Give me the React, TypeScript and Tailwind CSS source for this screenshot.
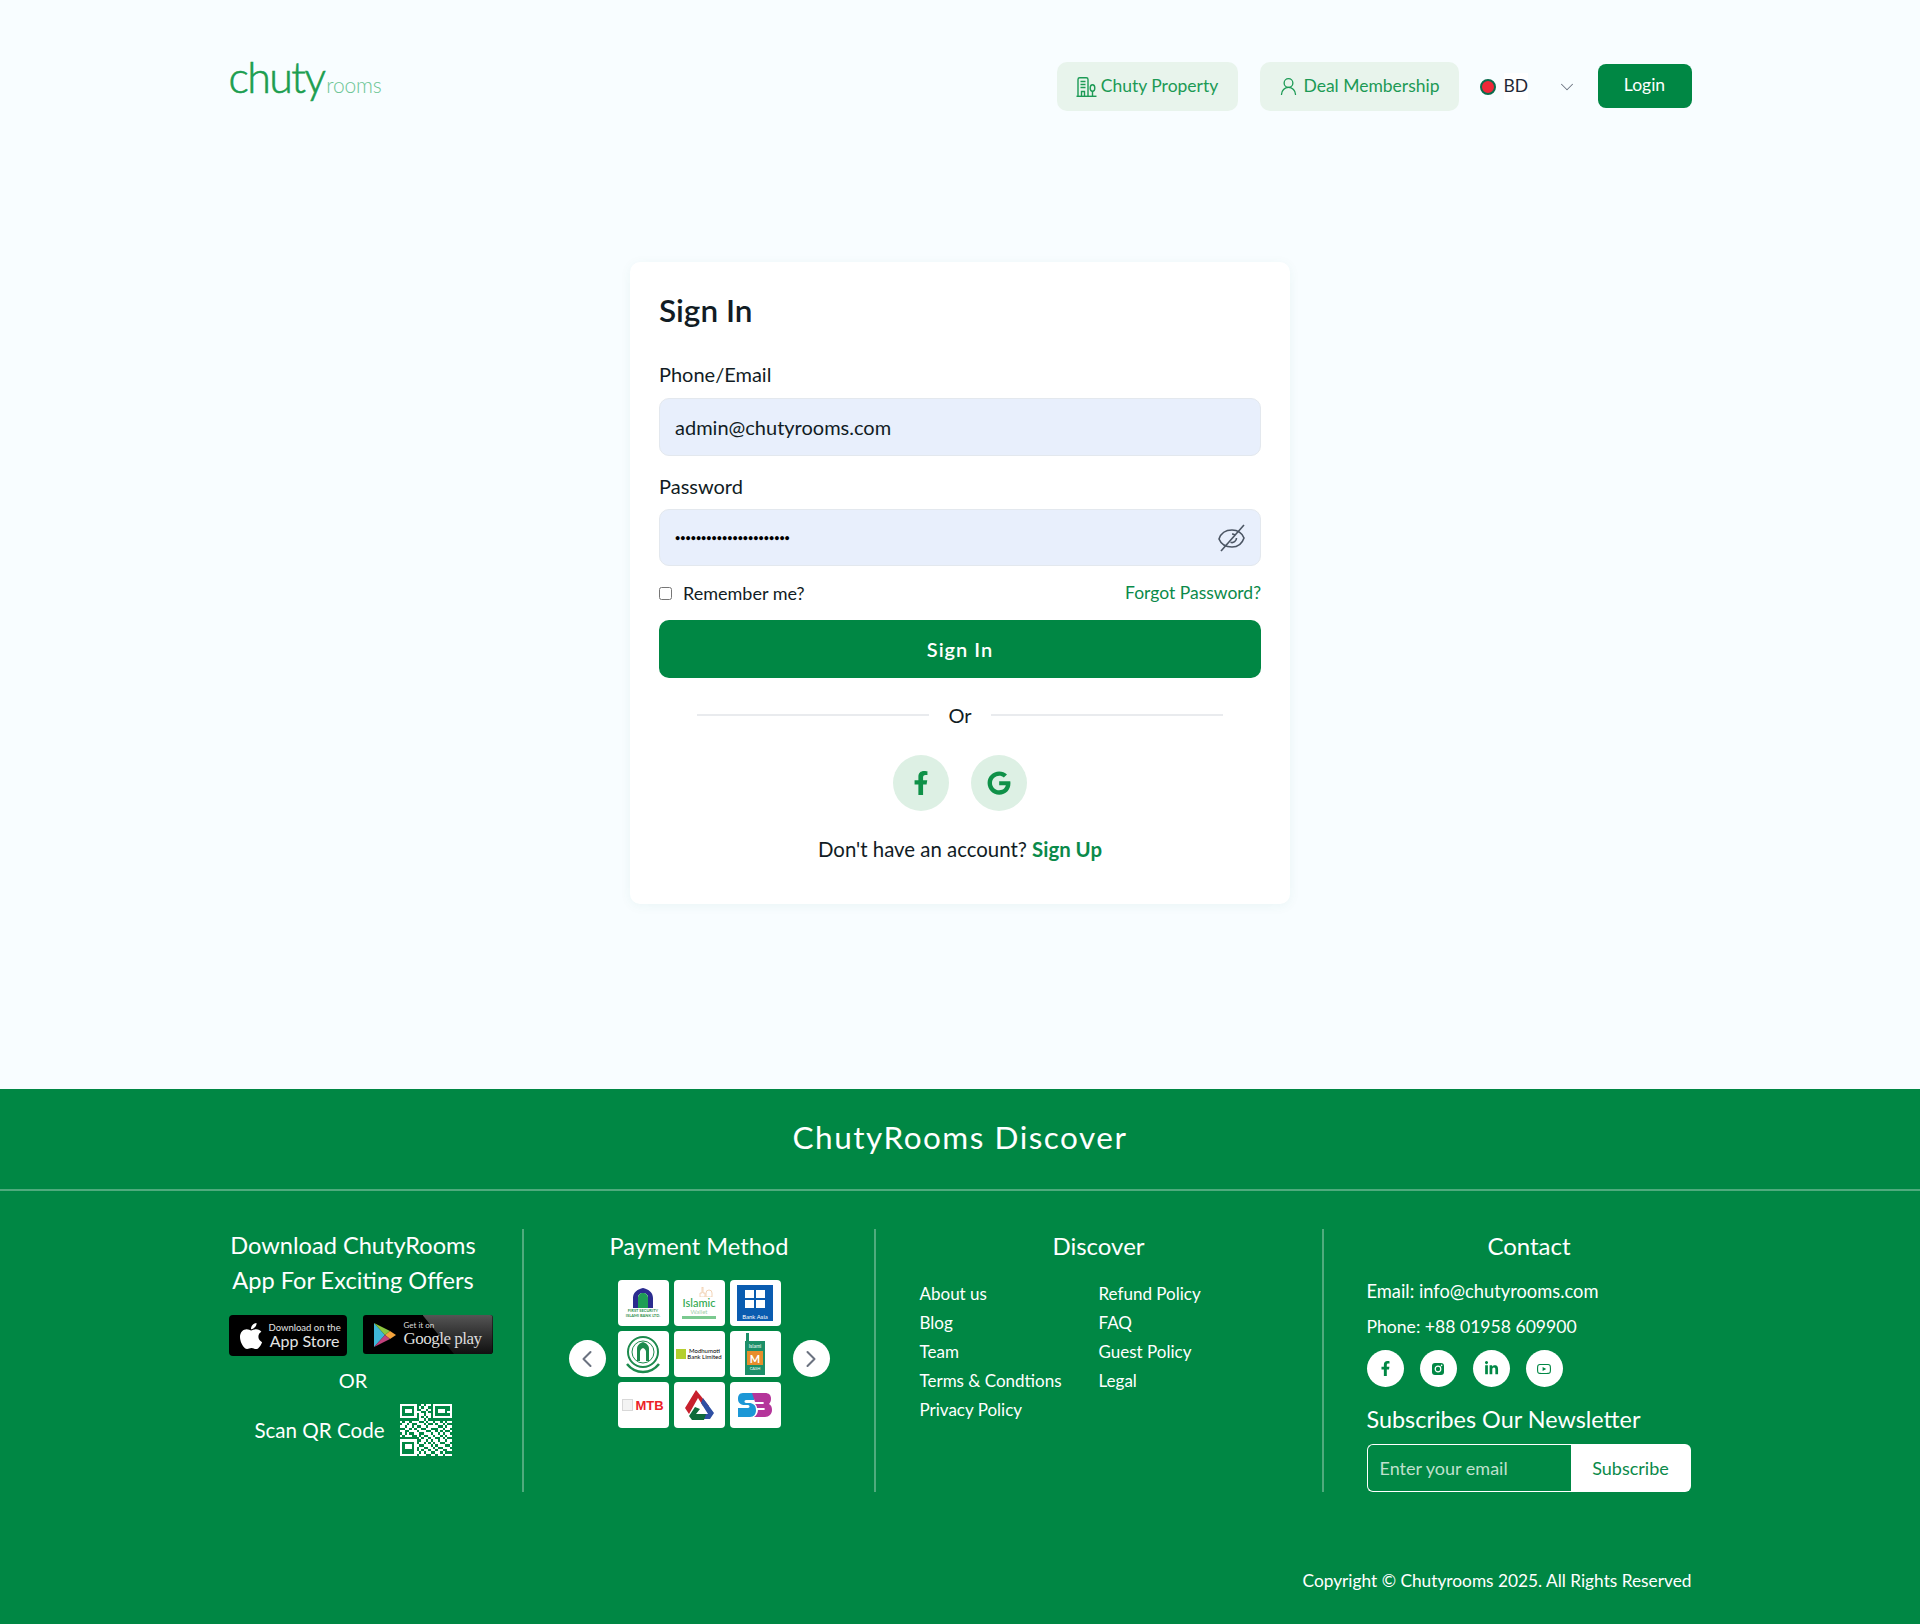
import { ChevronDown, ChevronLeft, ChevronRight, UserRound } from "lucide-react";
import { FaFacebookF, FaApple, FaLinkedinIn, FaGoogle } from "react-icons/fa";
import { AiOutlineYoutube } from "react-icons/ai";

const font = "font-['Lato','Liberation_Sans',sans-serif]";

const qrRows = [
  "1111111001011011111111",
  "1000001010110010000001",
  "1011101001101010111001",
  "1011101110010010111011",
  "1000001011011010000001",
  "1111111010101011111111",
  "0000000011010000000000",
  "1011011100101101101011",
  "0110100111010010110100",
  "1101101001101111001011",
  "0011010110011000110110",
  "1100111011100110101001",
  "0101001100111011010110",
  "1011100101001101101011",
  "0000000010110110010100",
  "1111111001101011011011",
  "1000001011010101100110",
  "1011101100111010111001",
  "1011101011001101001110",
  "1000001010110110110011",
  "1000001101011001101000",
  "1111111011100110110111",
];

function QrCode() {
  return (
    <svg width="52" height="52" viewBox="0 0 22 22" shapeRendering="crispEdges">
      <rect width="22" height="22" fill="#008744" />
      {qrRows.map((row, y) =>
        row.split("").map((c, x) => (c === "1" ? <rect key={`${x}-${y}`} x={x} y={y} width="1" height="1" fill="#fff" /> : null))
      )}
    </svg>
  );
}

function Logo() {
  return (
    <div className="flex items-end w-[154px] h-[35px]">
      <span className="font-['Lato',sans-serif] text-[43px] leading-[36px] font-light text-[#1c9e50] tracking-[-1.6px] [-webkit-text-stroke:0.6px_#1c9e50]">chuty</span>
      <span className="font-['Lato',sans-serif] text-[21px] leading-[20px] font-light text-[#6cc594] ml-[2px] tracking-[-0.2px]">rooms</span>
    </div>
  );
}

function PropertyIcon() {
  return (
    <svg width="21" height="20" viewBox="0 0 21 20" fill="none" stroke="currentColor" strokeWidth="1.4">
      <path d="M0.5 19.3h20" />
      <path d="M2 19V2.5C2 1.5 2.7 0.8 3.7 0.8h6.6c1 0 1.7 0.7 1.7 1.7V19" />
      <path d="M4.5 4.5h5M4.5 7.5h5M4.5 10.5h5" />
      <path d="M5.5 19v-4.5h3V19" />
      <ellipse cx="16.5" cy="11" rx="2.3" ry="3.2" />
      <path d="M16.5 14v5" />
    </svg>
  );
}

function HiddenEye() {
  return (
    <svg width="30" height="28" viewBox="0 0 30 28" fill="none" stroke="#4b5563" strokeWidth="1.6" className="shrink-0">
      <path d="M2 15c2-6 7-9 13-9s10 3 12 8c-2 6-7 9-12 9-6 0-11-3-13-8z" />
      <path d="M15 10a4.5 4.5 0 0 1 3 1.2M19.5 14a4.5 4.5 0 0 1-6 4.3" />
      <path d="M4 27L27 1" />
    </svg>
  );
}

function InstaIcon() {
  return (
    <svg width="14" height="14" viewBox="0 0 14 14">
      <rect x="1" y="1" width="12" height="12" rx="3" fill="#008744" />
      <circle cx="7" cy="7" r="2.8" fill="none" stroke="#fff" strokeWidth="1.2" />
      <circle cx="10.6" cy="3.4" r="0.8" fill="#fff" />
    </svg>
  );
}

function PlayBadge() {
  return (
    <div className="relative flex items-center w-[130px] h-[39px] rounded-[3px] bg-black overflow-hidden shrink-0">
      <div className="absolute top-0 right-0 h-full w-[70px] bg-gradient-to-b from-[#555] to-[#111] [clip-path:polygon(0_0,100%_0,100%_100%,45%_100%)]" />
      <svg width="24" height="26" viewBox="0 0 24 26" className="relative ml-[10px]">
        <polygon points="1,1 12,13 1,25" fill="#3fb6d8" />
        <polygon points="1,1 17,9 12,13" fill="#8cc63f" />
        <polygon points="17,9 23,13 17,17 12,13" fill="#f5a33b" />
        <polygon points="1,25 12,13 17,17" fill="#c2417d" />
      </svg>
      <div className="relative ml-[7px] flex flex-col text-left text-[#dcdcdc] font-['Liberation_Serif',serif]">
        <span className="text-[8px] leading-[9px] font-['Lato',sans-serif]">Get it on</span>
        <span className="text-[17px] leading-[18px] tracking-[-0.5px] whitespace-nowrap">Google play</span>
      </div>
    </div>
  );
}

function StoreBadge() {
  return (
    <div className="flex items-center w-[118px] h-[41px] rounded-[4px] bg-black text-[#e4e4e4] shrink-0">
      <FaApple className="ml-[7px] text-[30px] text-white" />
      <div className="ml-[3px] flex flex-col">
        <span className="text-[9.5px] leading-[11px] whitespace-nowrap">Download on the</span>
        <span className="text-[16px] leading-[16px] whitespace-nowrap">App Store</span>
      </div>
    </div>
  );
}

function BankTile({ children }: { children: React.ReactNode }) {
  return <div className="flex h-[46px] w-[51px] flex-col items-center justify-center overflow-hidden rounded-[4px] bg-white">{children}</div>;
}

function PaymentGrid() {
  return (
    <div className="grid grid-cols-[repeat(3,51px)] gap-x-[5px] gap-y-[5px]">
      <BankTile>
        <svg width="22" height="20" viewBox="0 0 22 20">
          <path d="M1 20V10C1 4 6 1 11 0c5 1 10 4 10 10v10h-5V9c0-2-2-4-5-4S6 7 6 9v11z" fill="#2b2c8f" />
          <path d="M6 20V10c0-3 2-5 5-5s5 2 5 5v10z" fill="#1e9e55" />
        </svg>
        <span className="text-[4px] font-bold leading-[5px] text-[#2f8f4e]">FIRST SECURITY</span>
        <span className="text-[4px] font-bold leading-[5px] text-[#2f8f4e]">ISLAMI BANK LTD.</span>
      </BankTile>
      <BankTile>
        <svg width="34" height="10" viewBox="0 0 34 10">
          <path d="M18 10V6h2V0h1v6h2v4zM24 10V6a3 3 0 0 1 6 0v4z" fill="none" stroke="#efc9a5" strokeWidth="0.8" />
        </svg>
        <span className="text-[11px] font-medium leading-[11px] text-[#2fa84f]">Islamic</span>
        <span className="text-[6px] leading-[7px] text-[#9fcfa9]">Wallet</span>
        <span className="mt-[1px] h-[3px] w-[34px] bg-[#7ac98f]" />
      </BankTile>
      <BankTile>
        <div className="flex h-[36px] w-[36px] flex-col items-center justify-between bg-[#0a5cb0] pt-[5px]">
          <div className="grid grid-cols-2 gap-[2px]">
            <span className="h-[8px] w-[9px] bg-white" />
            <span className="h-[8px] w-[9px] bg-white" />
            <span className="h-[8px] w-[9px] bg-white" />
            <span className="h-[8px] w-[9px] bg-white" />
          </div>
          <span className="text-[6px] leading-[8px] text-white">Bank Asia</span>
        </div>
      </BankTile>
      <BankTile>
        <svg width="40" height="40" viewBox="0 0 40 40">
          <circle cx="20" cy="18" r="15" fill="none" stroke="#1d8a4d" strokeWidth="2" />
          <circle cx="20" cy="18" r="11" fill="none" stroke="#1d8a4d" strokeWidth="1" />
          <path d="M14 27V15c0-4 3-6 6-7 3 1 6 3 6 7v12z" fill="#1d8a4d" />
          <path d="M17 27v-9c0-2 1-3 3-4 2 1 3 2 3 4v9z" fill="#fff" />
          <path d="M4 30c4 5 10 8 16 8s12-3 16-8" fill="none" stroke="#1d8a4d" strokeWidth="2.5" />
        </svg>
      </BankTile>
      <BankTile>
        <div className="flex items-center gap-[1px]">
          <span className="h-[10px] w-[10px] bg-[#b4cf2e]" />
          <div className="flex flex-col">
            <span className="text-[6px] leading-[6px] text-black whitespace-nowrap">Modhumoti</span>
            <span className="text-[6px] leading-[6px] text-black whitespace-nowrap">Bank Limited</span>
          </div>
        </div>
      </BankTile>
      <BankTile>
        <div className="relative flex h-[42px] w-[22px] flex-col items-center justify-end">
          <span className="absolute left-[2px] top-0 h-[10px] w-[3px] bg-[#1c8f68]" />
          <div className="flex h-[34px] w-[20px] flex-col items-center bg-[#1c8f68]">
            <span className="text-[5px] leading-[10px] text-white">Islami</span>
            <span className="flex h-[14px] w-[16px] items-center justify-center bg-[#e88d2a] text-[11px] font-bold leading-none text-white">M</span>
            <span className="text-[4px] leading-[8px] text-white">CASH</span>
          </div>
        </div>
      </BankTile>
      <BankTile>
        <div className="flex items-center gap-[2px]">
          <span className="h-[12px] w-[11px] border border-[#d8d8d8] bg-[#f3f3f3]" />
          <span className="text-[13px] font-bold leading-none text-[#ec2227] font-['Liberation_Sans',sans-serif]">MTB</span>
        </div>
      </BankTile>
      <BankTile>
        <svg width="32" height="32" viewBox="0 0 32 32">
          <path d="M13 1l-11 18 4 6 9-16 5 8h6z" fill="#c8202d" />
          <path d="M20 9l11 15-4 6H13l4-5h8l-7-11z" fill="#2e4fa3" />
          <path d="M6 27l6-9 5 2-4 5h10l-2 6H9z" fill="#0f6b3a" />
        </svg>
      </BankTile>
      <BankTile>
        <svg width="34" height="26" viewBox="0 0 34 26">
          <path d="M16 1H5C1 1 0 4 0 7c0 4 3 6 7 6h3c2 0 2 3 0 3H0v9h12c4 0 6-3 6-7 0-5-3-7-7-7H8c-2 0-2-3 0-3h8z" fill="#1c97d6" />
          <path d="M14 1h13c4 0 6 2 6 6 0 2-1 4-2 5 2 1 3 3 3 6 0 4-3 7-7 7H16c2-1 4-4 4-7h6c1 0 1-2 0-2h-7c0-2-1-3-2-4h8c1 0 1-2 0-2H17c-1-3-2-6-3-9z" fill="#b4359a" />
        </svg>
      </BankTile>
    </div>
  );
}

function SocialCircle({ children }: { children: React.ReactNode }) {
  return <div className="flex h-[37px] w-[37px] items-center justify-center rounded-full bg-white text-[#008744]">{children}</div>;
}

function FooterLink({ children }: { children: React.ReactNode }) {
  return <a className="block h-[29px] text-[17px] leading-[29px] whitespace-nowrap text-white">{children}</a>;
}

export default function App() {
  return (
    <div className={`${font} flex min-h-[1624px] flex-col bg-[#f8fdff] text-[#111c24]`}>
      <header className="mx-auto flex h-[172px] w-[1463px] items-start justify-between pt-[60px]">
        <Logo />
        <nav className="mt-[2px] flex h-[49px] items-center text-[17.5px]">
          <a className="flex h-[49px] w-[181px] items-center justify-center gap-[4px] rounded-[10px] bg-[#e8f4ec] text-[#1c9a55]">
            <PropertyIcon />
            Chuty Property
          </a>
          <a className="ml-[22px] flex h-[49px] w-[199px] items-center justify-center gap-[4px] rounded-[10px] bg-[#e8f4ec] text-[#1c9a55]">
            <UserRound size={21} strokeWidth={1.5} />
            Deal Membership
          </a>
          <span className="ml-[21px] h-[16px] w-[16px] rounded-full border-2 border-[#0b6b4d] bg-[#ee2738]" />
          <span className="ml-[8px] w-[24px] bg-white text-[#1f2937]">BD</span>
          <ChevronDown size={22} strokeWidth={1.1} className="ml-[28px] text-[#6b7280]" />
          <a className="ml-[20px] mb-[2px] flex h-[44px] w-[94px] items-center justify-center rounded-[8px] bg-[#008744] text-white">Login</a>
        </nav>
      </header>

      <main className="flex h-[917px] justify-center pt-[90px]">
        <section className="h-[642px] w-[660px] rounded-[10px] bg-white px-[29px] pt-[30px] shadow-[0_2px_12px_rgba(16,120,100,0.06)]">
          <h1 className="text-[31.5px] font-semibold leading-[37px]">Sign In</h1>
          <label className="mt-[28px] block text-[20px] leading-[34px]">Phone/Email</label>
          <div className="mt-[7px] flex h-[58px] items-center rounded-[10px] border border-[#e3e8ee] bg-[#e8effc] px-[15px] text-[20px]">admin@chutyrooms.com</div>
          <label className="mt-[13px] block text-[20px] leading-[34px]">Password</label>
          <div className="mt-[6px] flex h-[57px] items-center justify-between rounded-[10px] border border-[#e3e8ee] bg-[#e8effc] pl-[15px] pr-[13px]">
            <span className="text-[9px] font-bold text-black">••••••••••••••••••••••</span>
            <HiddenEye />
          </div>
          <div className="mt-[13px] flex h-[28px] items-center justify-between text-[18px]">
            <label className="flex items-center gap-[11px]">
              <input type="checkbox" className="h-[13px] w-[13px]" />
              Remember me?
            </label>
            <a className="text-[#0a8a4a] text-[17.5px]">Forgot Password?</a>
          </div>
          <button className="mt-[13px] h-[58px] w-full rounded-[10px] bg-[#008744] text-[20px] font-semibold tracking-[1px] text-white">Sign In</button>
          <div className="mx-[38px] mt-[21px] flex items-center gap-[19px] text-[20px]">
            <span className="h-[2px] flex-1 bg-[#e9ebee]" />
            <span className="leading-[32px]">Or</span>
            <span className="h-[2px] flex-1 bg-[#e9ebee]" />
          </div>
          <div className="mt-[24px] flex justify-center gap-[22px]">
            <a className="flex h-[56px] w-[56px] items-center justify-center rounded-full bg-[#ddf0e4] text-[#0f9148]">
              <FaFacebookF size={24} />
            </a>
            <a className="flex h-[56px] w-[56px] items-center justify-center rounded-full bg-[#ddf0e4] text-[#0f9148]">
              <FaGoogle size={24} />
            </a>
          </div>
          <p className="mt-[21px] text-center text-[20.4px] leading-[34px]">
            Don't have an account? <a className="font-bold text-[#0a8a4a]">Sign Up</a>
          </p>
        </section>
      </main>

      <footer className="flex-1 bg-[#008744] text-white">
        <h2 className="flex h-[102px] items-center justify-center border-b-2 border-[#4fab7d] pb-[2px] text-[31.5px] tracking-[1.5px]">ChutyRooms Discover</h2>
        <div className="mx-auto mt-[38px] flex h-[263px] w-[1463px]">
          <div className="w-[295px] border-r-2 border-[#4fab7d] pr-[44px] text-center">
            <p className="-mt-[1px] whitespace-nowrap text-[23.6px] leading-[35px]">Download ChutyRooms<br />App For Exciting Offers</p>
            <div className="mt-[17px] flex w-[264px] gap-[16px]">
              <StoreBadge />
              <PlayBadge />
            </div>
            <p className="mt-[10px] text-[20px] leading-[28px]">OR</p>
            <div className="mt-[10px] flex items-center justify-center gap-[15px]">
              <span className="text-[20.6px]">Scan QR Code</span>
              <QrCode />
            </div>
          </div>
          <div className="w-[352px] border-r-2 border-[#4fab7d] pl-[1px] text-center">
            <p className="text-[23.6px] leading-[35px]">Payment Method</p>
            <div className="mt-[16px] flex items-start justify-center gap-[12px]">
              <div className="mt-[60px] flex h-[37px] w-[37px] items-center justify-center rounded-full bg-white text-[#6b7280]">
                <ChevronLeft size={28} strokeWidth={1.75} />
              </div>
              <PaymentGrid />
              <div className="mt-[60px] flex h-[37px] w-[37px] items-center justify-center rounded-full bg-white text-[#6b7280]">
                <ChevronRight size={28} strokeWidth={1.75} />
              </div>
            </div>
          </div>
          <div className="w-[448px] border-r-2 border-[#4fab7d]">
            <p className="-mt-[1px] text-center text-[24px] leading-[35px]">Discover</p>
            <div className="mt-[16px] flex pl-[44px]">
              <div className="w-[179px]">
                <FooterLink>About us</FooterLink>
                <FooterLink>Blog</FooterLink>
                <FooterLink>Team</FooterLink>
                <FooterLink>Terms &amp; Condtions</FooterLink>
                <FooterLink>Privacy Policy</FooterLink>
              </div>
              <div>
                <FooterLink>Refund Policy</FooterLink>
                <FooterLink>FAQ</FooterLink>
                <FooterLink>Guest Policy</FooterLink>
                <FooterLink>Legal</FooterLink>
              </div>
            </div>
          </div>
          <div className="flex-1 pl-[43px]">
            <p className="-mt-[1px] text-center text-[24px] leading-[35px]">Contact</p>
            <p className="mt-[11px] text-[18.3px] leading-[35px]">Email: info@chutyrooms.com</p>
            <p className="text-[17.6px] leading-[35px]">Phone: +88 01958 609900</p>
            <div className="mt-[6px] flex gap-[16px]">
              <SocialCircle><FaFacebookF size={15} /></SocialCircle>
              <SocialCircle><InstaIcon /></SocialCircle>
              <SocialCircle><FaLinkedinIn size={15} /></SocialCircle>
              <SocialCircle><AiOutlineYoutube size={16} /></SocialCircle>
            </div>
            <p className="mt-[18px] text-[23.4px] leading-[29px]">Subscribes Our Newsletter</p>
            <div className="mt-[10px] mr-[1px] flex h-[48px] text-[18px]">
              <div className="flex w-[204px] items-center rounded-l-[6px] border border-r-0 border-white pl-[12px] text-[#bfe0cd]">Enter your email</div>
              <div className="flex flex-1 items-center justify-center rounded-r-[6px] bg-white text-[#0a8a4a]">Subscribe</div>
            </div>
          </div>
        </div>
        <p className="mx-auto mt-[76px] w-[1463px] text-right text-[17.3px]">Copyright © Chutyrooms 2025. All Rights Reserved</p>
      </footer>
    </div>
  );
}
